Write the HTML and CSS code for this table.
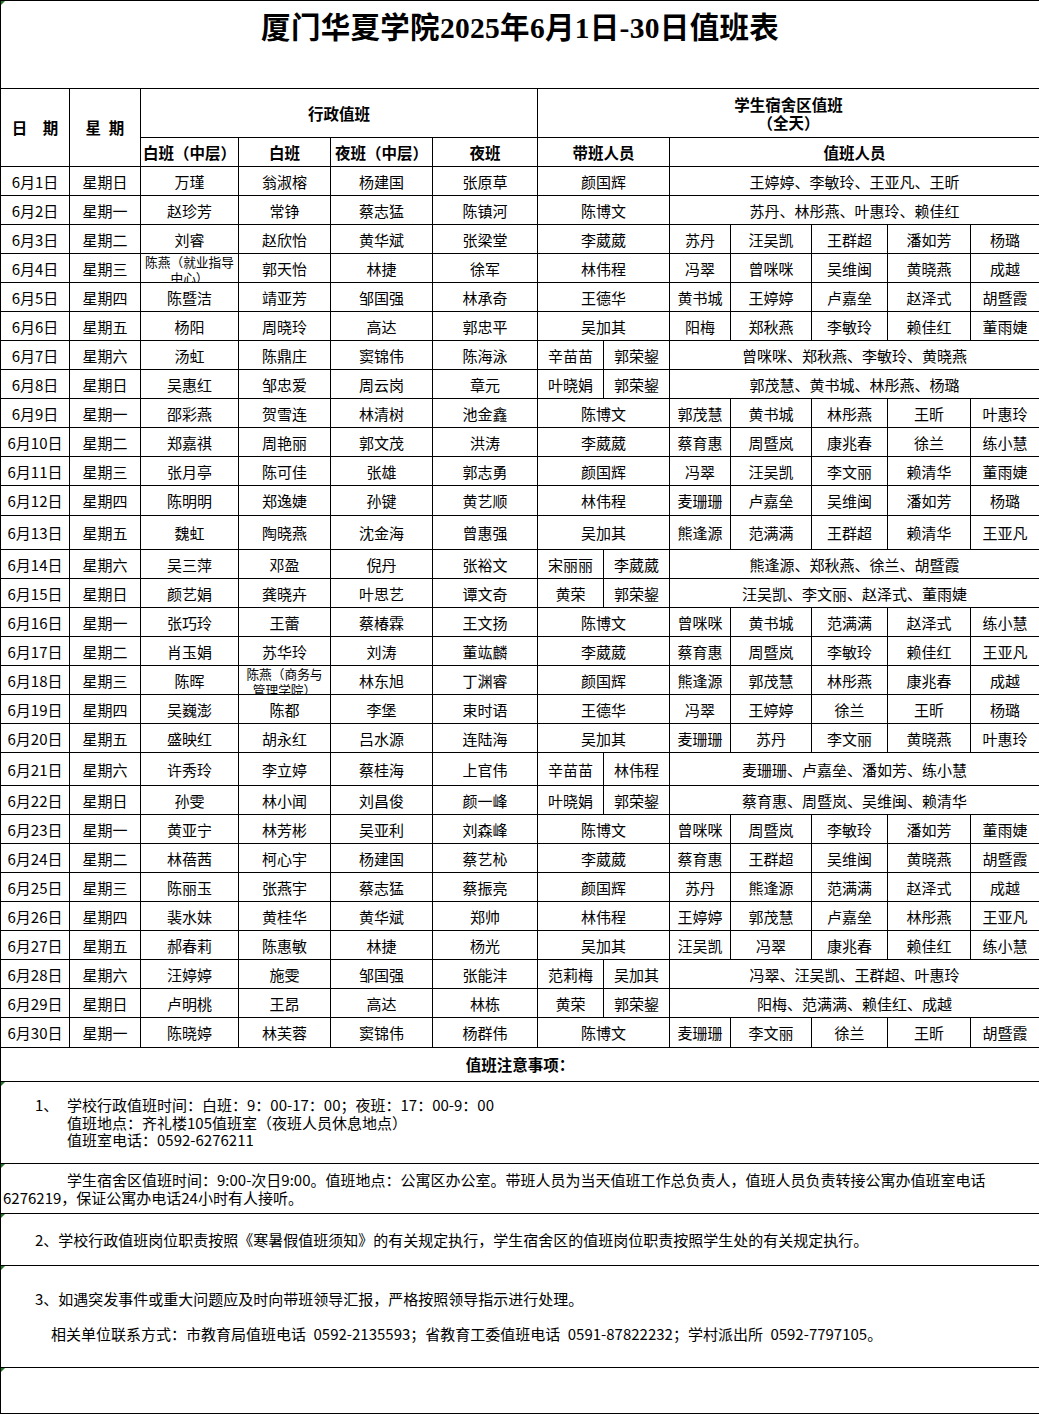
FILE: index.html
```html
<!DOCTYPE html>
<html lang="zh-CN">
<head>
<meta charset="utf-8">
<title>厦门华夏学院2025年6月1日-30日值班表</title>
<link rel="stylesheet" href="styles.css">
</head>
<body>
<table class="sheet">
<colgroup>
<col class="c-date"><col class="c-week"><col class="c-a1"><col class="c-a2"><col class="c-a3"><col class="c-a4">
<col class="c-l1"><col class="c-l2"><col class="c-s1"><col class="c-s2"><col class="c-s3"><col class="c-s4"><col class="c-s5">
</colgroup>
<tbody>
<tr class="r-title"><td colspan="13" class="title mark">厦门华夏学院2025年6月1日-30日值班表</td></tr>
<tr class="r-h1">
<td rowspan="2" class="hd">日　期</td>
<td rowspan="2" class="hd">星&ensp;期</td>
<td colspan="4" class="hd">行政值班</td>
<td colspan="7" class="hd two">学生宿舍区值班<br>（全天）</td>
</tr>
<tr class="r-h2">
<td class="hd">白班（中层）</td><td class="hd">白班</td><td class="hd">夜班（中层）</td><td class="hd">夜班</td>
<td colspan="2" class="hd">带班人员</td><td colspan="5" class="hd">值班人员</td>
</tr>

<tr><td>6月1日</td><td>星期日</td><td>万瑾</td><td>翁淑榕</td><td>杨建国</td><td>张原草</td><td colspan="2">颜国辉</td><td colspan="5">王婷婷、李敏玲、王亚凡、王昕</td></tr>
<tr><td>6月2日</td><td>星期一</td><td>赵珍芳</td><td>常铮</td><td>蔡志猛</td><td>陈镇河</td><td colspan="2">陈博文</td><td colspan="5">苏丹、林彤燕、叶惠玲、赖佳红</td></tr>
<tr><td>6月3日</td><td>星期二</td><td>刘睿</td><td>赵欣怡</td><td>黄华斌</td><td>张梁堂</td><td colspan="2">李葳葳</td><td>苏丹</td><td>汪吴凯</td><td>王群超</td><td>潘如芳</td><td>杨璐</td></tr>
<tr><td>6月4日</td><td>星期三</td><td class="wrap"><div class="wrapbox">陈燕（就业指导中心）</div></td><td>郭天怡</td><td>林捷</td><td>徐军</td><td colspan="2">林伟程</td><td>冯翠</td><td>曾咪咪</td><td>吴维闽</td><td>黄晓燕</td><td>成越</td></tr>
<tr><td>6月5日</td><td>星期四</td><td>陈暨洁</td><td>靖亚芳</td><td>邹国强</td><td>林承奇</td><td colspan="2">王德华</td><td>黄书城</td><td>王婷婷</td><td>卢嘉垒</td><td>赵泽式</td><td>胡暨霞</td></tr>
<tr><td>6月6日</td><td>星期五</td><td>杨阳</td><td>周晓玲</td><td>高达</td><td>郭忠平</td><td colspan="2">吴加其</td><td>阳梅</td><td>郑秋燕</td><td>李敏玲</td><td>赖佳红</td><td>董雨婕</td></tr>
<tr><td>6月7日</td><td>星期六</td><td>汤虹</td><td>陈鼎庄</td><td>窦锦伟</td><td>陈海泳</td><td>辛苗苗</td><td>郭荣鋆</td><td colspan="5">曾咪咪、郑秋燕、李敏玲、黄晓燕</td></tr>
<tr><td>6月8日</td><td>星期日</td><td>吴惠红</td><td>邹忠爱</td><td>周云岗</td><td>章元</td><td>叶晓娟</td><td>郭荣鋆</td><td colspan="5">郭茂慧、黄书城、林彤燕、杨璐</td></tr>
<tr><td>6月9日</td><td>星期一</td><td>邵彩燕</td><td>贺雪连</td><td>林清树</td><td>池金鑫</td><td colspan="2">陈博文</td><td>郭茂慧</td><td>黄书城</td><td>林彤燕</td><td>王昕</td><td>叶惠玲</td></tr>
<tr><td>6月10日</td><td>星期二</td><td>郑嘉祺</td><td>周艳丽</td><td>郭文茂</td><td>洪涛</td><td colspan="2">李葳葳</td><td>蔡育惠</td><td>周暨岚</td><td>康兆春</td><td>徐兰</td><td>练小慧</td></tr>
<tr><td>6月11日</td><td>星期三</td><td>张月亭</td><td>陈可佳</td><td>张雄</td><td>郭志勇</td><td colspan="2">颜国辉</td><td>冯翠</td><td>汪吴凯</td><td>李文丽</td><td>赖清华</td><td>董雨婕</td></tr>
<tr class="r30"><td>6月12日</td><td>星期四</td><td>陈明明</td><td>郑逸婕</td><td>孙键</td><td>黄艺顺</td><td colspan="2">林伟程</td><td>麦珊珊</td><td>卢嘉垒</td><td>吴维闽</td><td>潘如芳</td><td>杨璐</td></tr>
<tr class="r34"><td>6月13日</td><td>星期五</td><td>魏虹</td><td>陶晓燕</td><td>沈金海</td><td>曾惠强</td><td colspan="2">吴加其</td><td>熊逢源</td><td>范满满</td><td>王群超</td><td>赖清华</td><td>王亚凡</td></tr>
<tr><td>6月14日</td><td>星期六</td><td>吴三萍</td><td>邓盈</td><td>倪丹</td><td>张裕文</td><td>宋丽丽</td><td>李葳葳</td><td colspan="5">熊逢源、郑秋燕、徐兰、胡暨霞</td></tr>
<tr><td>6月15日</td><td>星期日</td><td>颜艺娟</td><td>龚晓卉</td><td>叶思艺</td><td>谭文奇</td><td>黄荣</td><td>郭荣鋆</td><td colspan="5">汪吴凯、李文丽、赵泽式、董雨婕</td></tr>
<tr><td>6月16日</td><td>星期一</td><td>张巧玲</td><td>王蕾</td><td>蔡椿霖</td><td>王文扬</td><td colspan="2">陈博文</td><td>曾咪咪</td><td>黄书城</td><td>范满满</td><td>赵泽式</td><td>练小慧</td></tr>
<tr><td>6月17日</td><td>星期二</td><td>肖玉娟</td><td>苏华玲</td><td>刘涛</td><td>董竑麟</td><td colspan="2">李葳葳</td><td>蔡育惠</td><td>周暨岚</td><td>李敏玲</td><td>赖佳红</td><td>王亚凡</td></tr>
<tr><td>6月18日</td><td>星期三</td><td>陈晖</td><td class="wrap"><div class="wrapbox">陈燕（商务与管理学院）</div></td><td>林东旭</td><td>丁渊睿</td><td colspan="2">颜国辉</td><td>熊逢源</td><td>郭茂慧</td><td>林彤燕</td><td>康兆春</td><td>成越</td></tr>
<tr><td>6月19日</td><td>星期四</td><td>吴巍澎</td><td>陈都</td><td>李堡</td><td>束时语</td><td colspan="2">王德华</td><td>冯翠</td><td>王婷婷</td><td>徐兰</td><td>王昕</td><td>杨璐</td></tr>
<tr><td>6月20日</td><td>星期五</td><td>盛映红</td><td>胡永红</td><td>吕水源</td><td>连陆海</td><td colspan="2">吴加其</td><td>麦珊珊</td><td>苏丹</td><td>李文丽</td><td>黄晓燕</td><td>叶惠玲</td></tr>
<tr class="r33"><td>6月21日</td><td>星期六</td><td>许秀玲</td><td>李立婷</td><td>蔡桂海</td><td>上官伟</td><td>辛苗苗</td><td>林伟程</td><td colspan="5">麦珊珊、卢嘉垒、潘如芳、练小慧</td></tr>
<tr><td>6月22日</td><td>星期日</td><td>孙雯</td><td>林小闻</td><td>刘昌俊</td><td>颜一峰</td><td>叶晓娟</td><td>郭荣鋆</td><td colspan="5">蔡育惠、周暨岚、吴维闽、赖清华</td></tr>
<tr><td>6月23日</td><td>星期一</td><td>黄亚宁</td><td>林芳彬</td><td>吴亚利</td><td>刘森峰</td><td colspan="2">陈博文</td><td>曾咪咪</td><td>周暨岚</td><td>李敏玲</td><td>潘如芳</td><td>董雨婕</td></tr>
<tr><td>6月24日</td><td>星期二</td><td>林蓓茜</td><td>柯心宇</td><td>杨建国</td><td>蔡艺杺</td><td colspan="2">李葳葳</td><td>蔡育惠</td><td>王群超</td><td>吴维闽</td><td>黄晓燕</td><td>胡暨霞</td></tr>
<tr><td>6月25日</td><td>星期三</td><td>陈丽玉</td><td>张燕宇</td><td>蔡志猛</td><td>蔡振亮</td><td colspan="2">颜国辉</td><td>苏丹</td><td>熊逢源</td><td>范满满</td><td>赵泽式</td><td>成越</td></tr>
<tr><td>6月26日</td><td>星期四</td><td>裴水妹</td><td>黄桂华</td><td>黄华斌</td><td>郑帅</td><td colspan="2">林伟程</td><td>王婷婷</td><td>郭茂慧</td><td>卢嘉垒</td><td>林彤燕</td><td>王亚凡</td></tr>
<tr><td>6月27日</td><td>星期五</td><td>郝春莉</td><td>陈惠敏</td><td>林捷</td><td>杨光</td><td colspan="2">吴加其</td><td>汪吴凯</td><td>冯翠</td><td>康兆春</td><td>赖佳红</td><td>练小慧</td></tr>
<tr><td>6月28日</td><td>星期六</td><td>汪婷婷</td><td>施雯</td><td>邹国强</td><td>张能沣</td><td>范莉梅</td><td>吴加其</td><td colspan="5">冯翠、汪吴凯、王群超、叶惠玲</td></tr>
<tr><td>6月29日</td><td>星期日</td><td>卢明桃</td><td>王昂</td><td>高达</td><td>林栋</td><td>黄荣</td><td>郭荣鋆</td><td colspan="5">阳梅、范满满、赖佳红、成越</td></tr>
<tr class="r30"><td>6月30日</td><td>星期一</td><td>陈晓婷</td><td>林芙蓉</td><td>窦锦伟</td><td>杨群伟</td><td colspan="2">陈博文</td><td>麦珊珊</td><td>李文丽</td><td>徐兰</td><td>王昕</td><td>胡暨霞</td></tr>

<tr class="n-head"><td colspan="13" class="hd">值班注意事项：</td></tr>
<tr class="n-a"><td colspan="13" class="note mark">
<div class="ln ln-num"><span class="num">1、</span>学校行政值班时间：白班：9：00-17：00；夜班：17：00-9：00</div>
<div class="ln ln-sub">值班地点：齐礼楼105值班室（夜班人员休息地点）</div>
<div class="ln ln-sub">值班室电话：0592-6276211</div>
</td></tr>
<tr class="n-b"><td colspan="13" class="note mark">
<div class="ln ln-indent">学生宿舍区值班时间：9:00-次日9:00。值班地点：公寓区办公室。带班人员为当天值班工作总负责人，值班人员负责转接公寓办值班室电话<br>6276219，保证公寓办电话24小时有人接听。</div>
</td></tr>
<tr class="n-c"><td colspan="13" class="note mark">
<div class="ln ln-item">2、学校行政值班岗位职责按照《寒暑假值班须知》的有关规定执行，学生宿舍区的值班岗位职责按照学生处的有关规定执行。</div>
</td></tr>
<tr class="n-d"><td colspan="13" class="note mark">
<div class="ln ln-item">3、如遇突发事件或重大问题应及时向带班领导汇报，严格按照领导指示进行处理。</div>
<div class="ln ln-blank">&nbsp;</div>
<div class="ln ln-contact">相关单位联系方式：市教育局值班电话&ensp;0592-2135593；省教育工委值班电话&ensp;0591-87822232；学村派出所&ensp;0592-7797105。</div>
</td></tr>
<tr class="n-e"><td colspan="13" class="note mark"></td></tr>
</tbody>
</table>
</body>
</html>
```

FILE: styles.css
```css
html, body {
  margin: 0;
  padding: 0;
  background: #ffffff;
}

body {
  width: 1039px;
  color: #000000;
  font-family: "Noto Sans CJK SC", "Noto Sans", sans-serif;
}

.sheet {
  border-collapse: collapse;
  table-layout: fixed;
  width: 1039px;
}

.c-date { width: 69px; }
.c-week { width: 71px; }
.c-a1 { width: 98px; }
.c-a2 { width: 92px; }
.c-a3 { width: 102px; }
.c-a4 { width: 105px; }
.c-l1 { width: 66px; }
.c-l2 { width: 66px; }
.c-s1 { width: 61px; }
.c-s2 { width: 81px; }
.c-s3 { width: 76px; }
.c-s4 { width: 83px; }
.c-s5 { width: 69px; }

.sheet td {
  border: 1px solid #000000;
  padding: 0;
  text-align: center;
  vertical-align: middle;
  font-size: 15px;
  line-height: 17px;
  white-space: nowrap;
  overflow: hidden;
}

.sheet tr { height: 29px; }
.sheet tr.r30 { height: 30px; }
.sheet tr.r33 { height: 33px; }
.sheet tr.r34 { height: 34px; }

.sheet tr.r-title { height: 88px; }
.sheet tr.r-h1 { height: 49px; }
.sheet tr.r-h2 { height: 29px; }

.sheet td.title {
  vertical-align: top;
  padding-top: 9px;
  font-family: "Liberation Serif", "Noto Sans CJK SC", serif;
  font-weight: 700;
  font-size: 29.5px;
  line-height: 36px;
  letter-spacing: 0.3px;
}

.sheet td.hd {
  font-weight: 700;
  font-size: 15.5px;
}

.sheet td.two {
  line-height: 18px;
}

.sheet td.wrap {
  vertical-align: top;
}

.wrapbox {
  height: 28px;
  overflow: hidden;
  padding: 0 3px;
  font-size: 12.7px;
  line-height: 16px;
  white-space: normal;
  text-align: center;
}

.sheet tr.n-head { height: 34px; }
.sheet tr.n-a { height: 82px; }
.sheet tr.n-b { height: 50px; }
.sheet tr.n-c { height: 52px; }
.sheet tr.n-d { height: 102px; }
.sheet tr.n-e { height: 46px; }

.sheet td.note {
  text-align: left;
  white-space: normal;
  font-size: 15px;
  font-weight: 400;
  line-height: 17.5px;
}

.sheet td.mark {
  position: relative;
}

.sheet td.mark::before {
  content: "";
  position: absolute;
  top: 0;
  left: 0;
  width: 0;
  height: 0;
  border-top: 4px solid #1f7a1f;
  border-right: 4px solid transparent;
}

.ln { white-space: nowrap; }
.ln-num { padding-left: 34px; }
.num { display: inline-block; width: 32px; }
.ln-sub { padding-left: 66px; }
.ln-indent { padding-left: 2px; text-indent: 64px; }
.ln-item { padding-left: 34px; }
.ln-contact { padding-left: 50px; }
```
